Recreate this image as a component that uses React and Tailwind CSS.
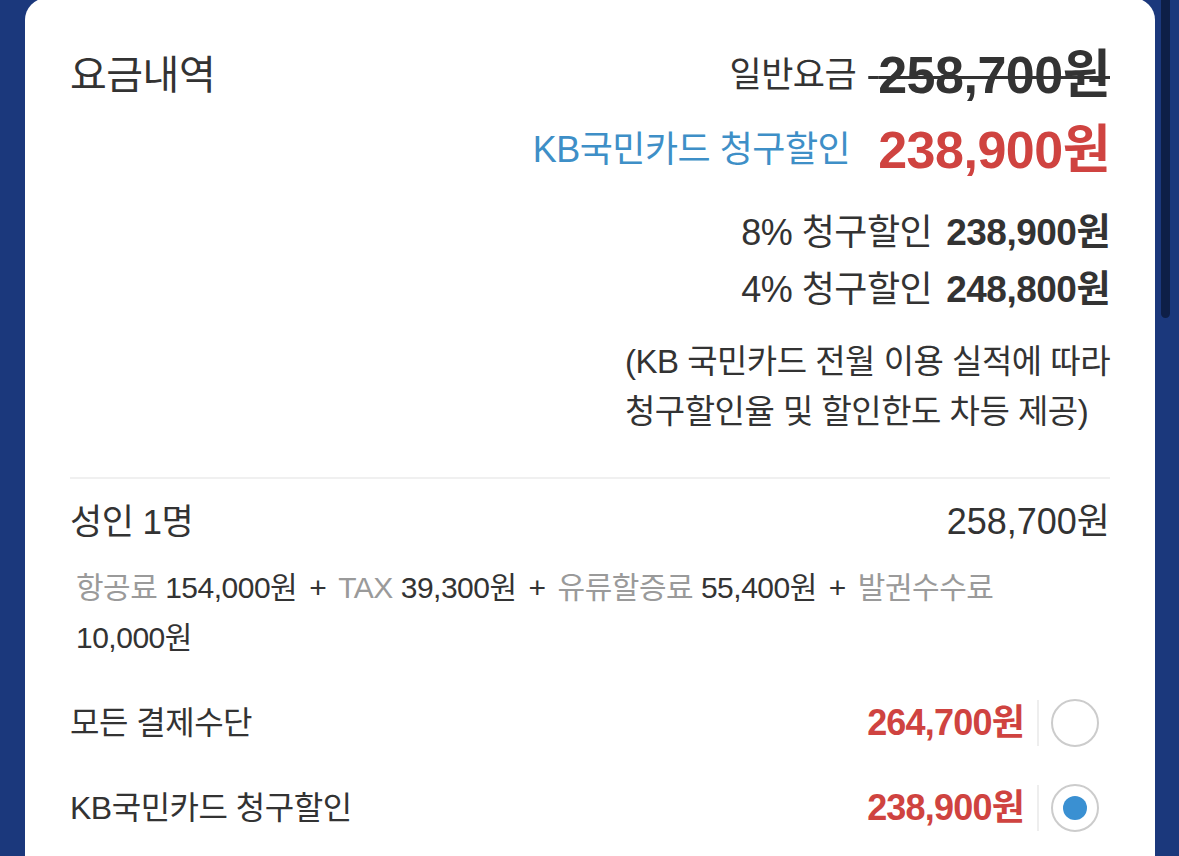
import React from 'react';

const FONT = "font-['Liberation_Sans','Noto_Sans_CJK_KR',sans-serif]";

function FeeLabel({ children }) {
  return <span className="text-[#9a9a9a] whitespace-nowrap">{children}</span>;
}

function Plus() {
  return <span className="mx-[12px]">+</span>;
}

function PayRow({ label, price, selected, className }) {
  return (
    <div className={`flex items-center justify-between h-[70px] ${className}`}>
      <span className="text-[32px] text-[#333] tracking-[-0.5px]">{label}</span>
      <div className="flex items-center">
        <span className="text-[36px] font-bold text-[#cf4340] tracking-[-0.8px]">{price}</span>
        <div className="w-[2px] h-[46px] bg-[#eeeeee] ml-[13px]" />
        <div className="ml-[12px] mr-[11px] w-[48px] h-[48px] rounded-full border-2 border-[#cccccc] flex items-center justify-center">
          {selected && <div className="w-[24px] h-[24px] rounded-full bg-[#3a90d2]" />}
        </div>
      </div>
    </div>
  );
}

export default function App() {
  return (
    <div className={`relative h-[856px] overflow-hidden bg-[#1b387c] ${FONT}`}>
      {/* page scrollbar */}
      <div className="absolute left-[1161px] top-0 w-[9px] h-[318px] rounded-b-full bg-[#0e1f47]" />

      <div className="ml-[25px] w-[1130px] h-[900px] -mt-[2px] bg-white rounded-t-[22px] px-[45px] pt-[42px] text-[#333]">
        {/* summary */}
        <div className="flex justify-between">
          <h1 className="text-[40px] leading-[70px] font-normal tracking-[-0.5px] m-0">요금내역</h1>
          <div className="flex flex-col items-end">
            <div className="flex items-center h-[70px]">
              <span className="text-[35px] tracking-[-0.5px]">일반요금</span>
              <span className="text-[52px] font-bold tracking-[-0.5px] line-through decoration-[3px] ml-[12px]">
                {'\u2009'}258,700원
              </span>
            </div>
            <div className="flex items-center h-[70px] mt-[5px]">
              <span className="text-[36px] text-[#3e8fc7] tracking-[-0.5px]">KB국민카드 청구할인</span>
              <span className="text-[52px] font-bold text-[#cf4340] tracking-[-0.5px] ml-[28px]">238,900원</span>
            </div>
            <div className="flex items-center h-[57px] mt-[19px]">
              <span className="text-[36px] tracking-[-0.5px]">8% 청구할인</span>
              <span className="text-[37px] font-bold tracking-[-0.5px] ml-[14px]">238,900원</span>
            </div>
            <div className="flex items-center h-[57px]">
              <span className="text-[36px] tracking-[-0.5px]">4% 청구할인</span>
              <span className="text-[37px] font-bold tracking-[-0.5px] ml-[14px]">248,800원</span>
            </div>
            <p className="mt-[19px] text-[33px] leading-[50px] tracking-[-0.5px] whitespace-nowrap text-left">
              (KB 국민카드 전월 이용 실적에 따라
              <br />
              청구할인율 및 할인한도 차등 제공)
            </p>
          </div>
        </div>

        <div className="mt-[40px] h-[2px] bg-[#f0f0f0]" />

        {/* passenger breakdown */}
        <div className="flex items-center justify-between mt-[18px] h-[50px]">
          <span className="text-[35px] tracking-[-0.5px]">성인 1명</span>
          <span className="text-[36px]">258,700원</span>
        </div>
        <p className="mt-[16px] pl-[6px] text-[30px] leading-[50px] tracking-[-0.5px] text-[#333] pr-[90px]">
          <FeeLabel>항공료</FeeLabel> 154,000원<Plus /><FeeLabel>TAX</FeeLabel> 39,300원<Plus />
          <FeeLabel>유류할증료</FeeLabel> 55,400원<Plus /><FeeLabel>발권수수료</FeeLabel> 10,000원
        </p>

        {/* payment methods */}
        <PayRow label="모든 결제수단" price="264,700원" className="mt-[25px]" />
        <PayRow label="KB국민카드 청구할인" price="238,900원" selected className="mt-[15px]" />
      </div>
    </div>
  );
}
